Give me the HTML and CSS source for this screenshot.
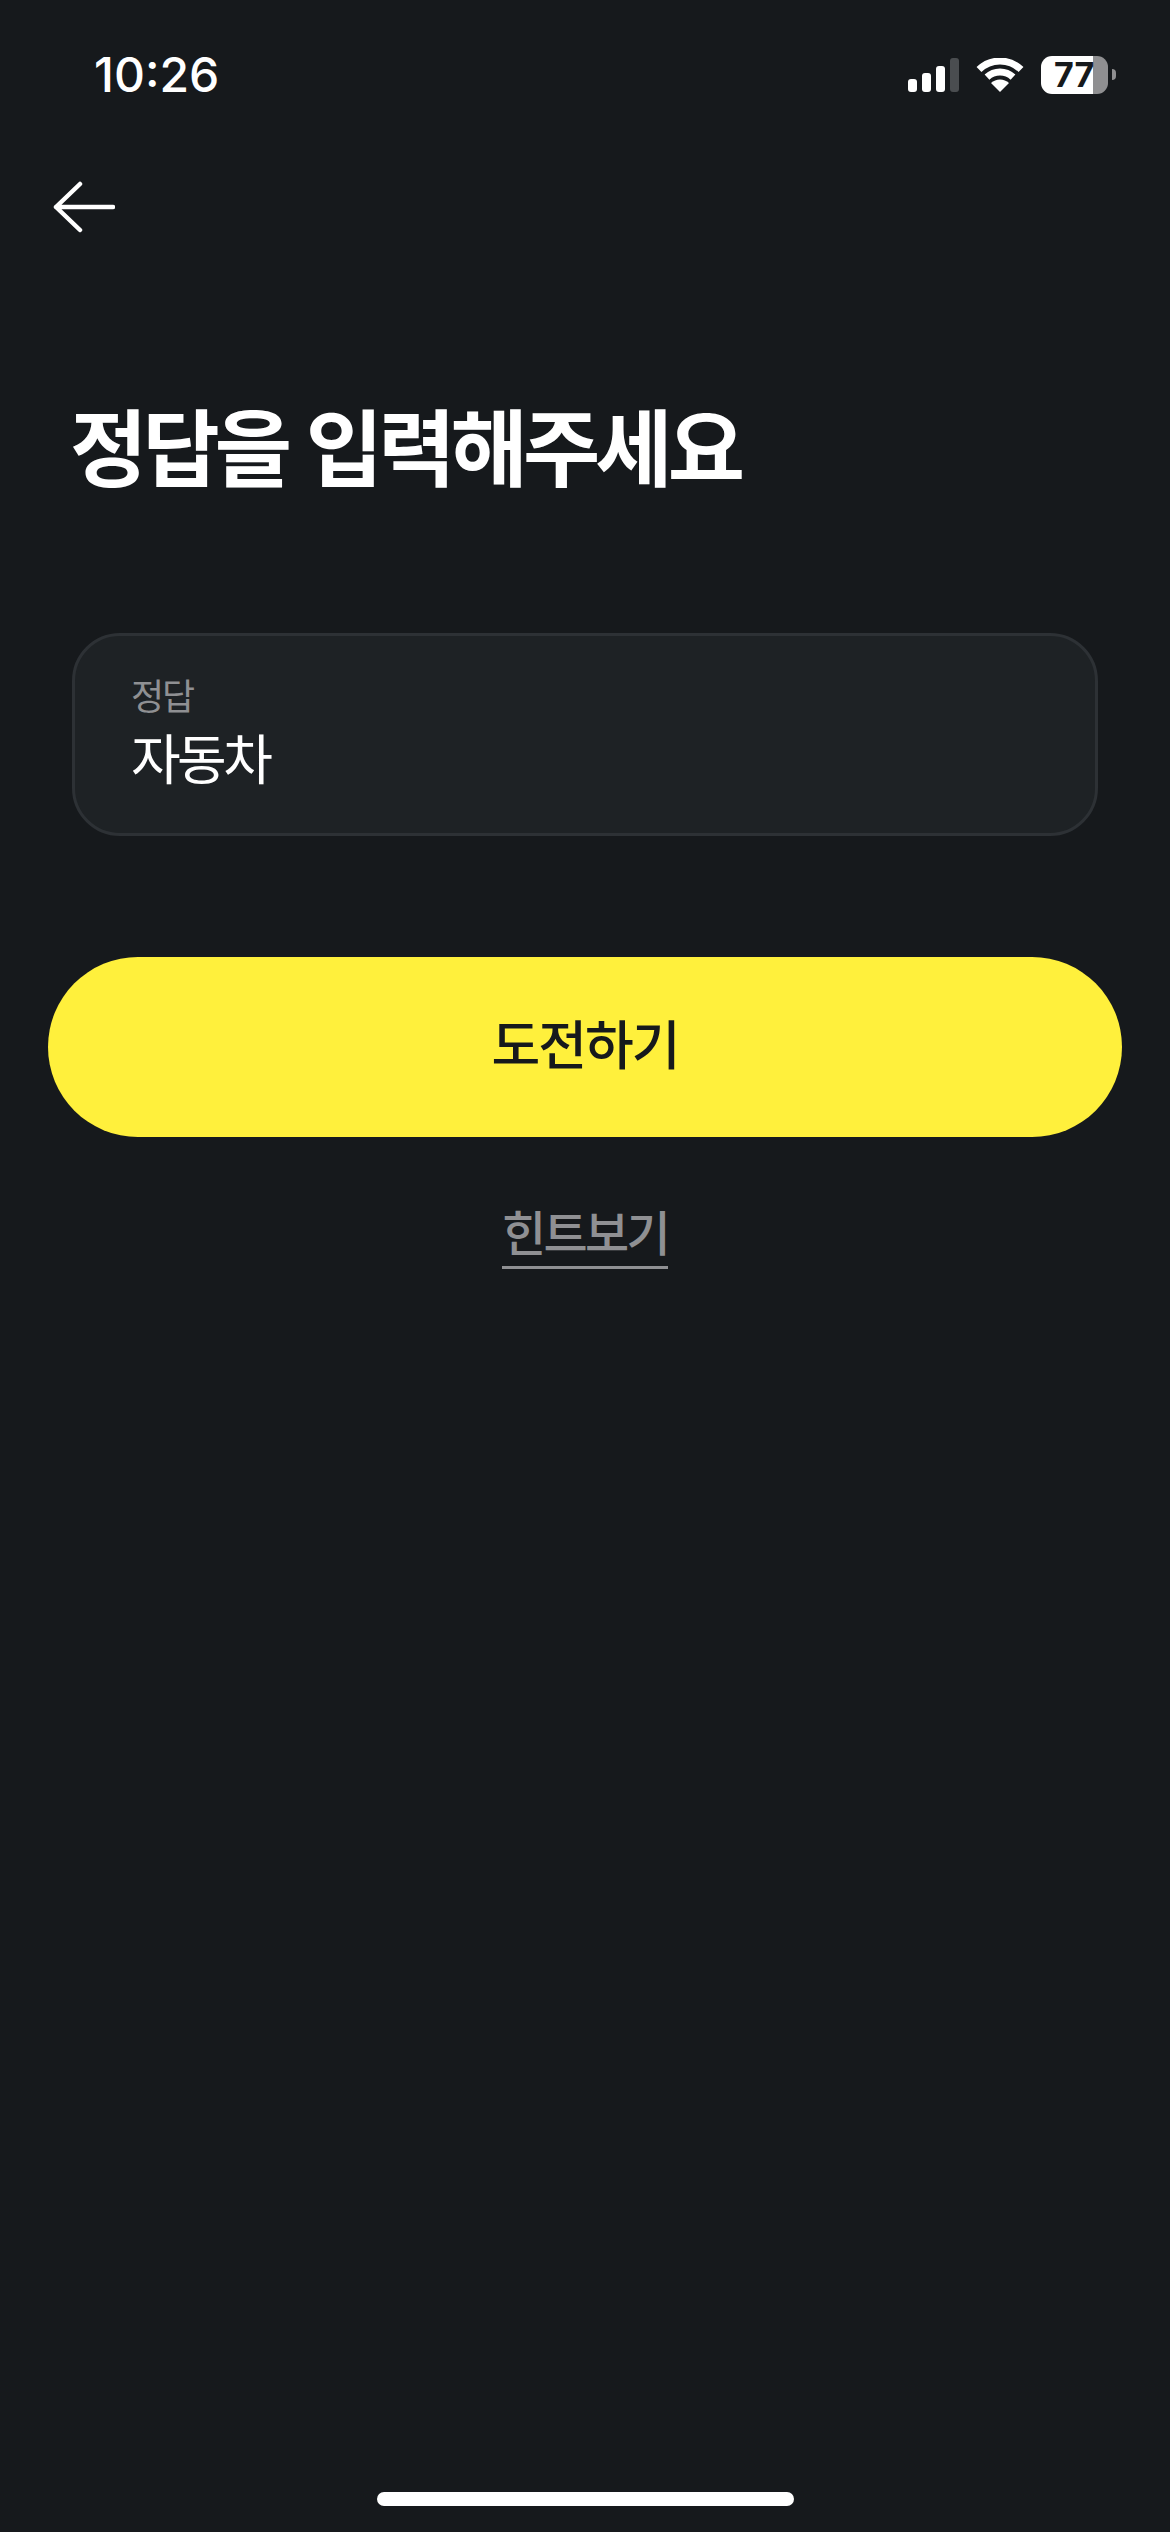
FILE: index.html
```html
<!DOCTYPE html>
<html lang="ko">
<head>
    <title>정답 입력</title>
    <link rel="stylesheet" href="styles.css">
</head>
<body>
    <div class="status">
        <span class="time">10:26</span>
        <div class="status-icons">
            <div class="signal">
                <i class="bar bar1"></i>
                <i class="bar bar2"></i>
                <i class="bar bar3"></i>
                <i class="bar bar4"></i>
            </div>
            <svg class="wifi" width="48" height="34" viewBox="0 0 48 34">
                <path d="M3 11.6A30 30 0 0 1 45 11.6M11 19.1A19 19 0 0 1 37 19.1" fill="none" stroke="#fff" stroke-width="7"/>
                <path d="M24 34L15 25A13 13 0 0 1 33 25Z" fill="#fff"/>
            </svg>
            <div class="battery">77</div>
            <i class="battery-nib"></i>
        </div>
    </div>

    <a class="back">
        <svg width="62" height="52" viewBox="0 0 62 52">
            <path d="M60 26H3M27 3L3 26L27 49" fill="none" stroke="#fff" stroke-width="4.5" stroke-linecap="round" stroke-linejoin="round"/>
        </svg>
    </a>

    <h1 class="title">정답을 입력해주세요</h1>

    <div class="answer-box">
        <label class="answer-label">정답</label>
        <div class="answer-value">자동차</div>
    </div>

    <button class="submit">도전하기</button>

    <div class="hint-row">
        <a class="hint">힌트보기</a>
    </div>

    <div class="home-bar"></div>
</body>
</html>
```

FILE: styles.css
```css
html, body {
    margin: 0;
    height: 2532px;
}
body {
    display: flex;
    flex-direction: column;
    background-color: #16191c;
    color: #fff;
    font-family: "Noto Sans CJK KR", "Noto Sans", sans-serif;
}
.status {
    display: flex;
    justify-content: space-between;
    align-items: center;
    height: 149px;
    padding: 0 54px 0 94px;
}
.time {
    font-family: Inter, sans-serif;
    font-size: 48px;
    font-weight: 500;
}
.status-icons {
    display: flex;
    align-items: center;
}
.signal {
    display: flex;
    align-items: flex-end;
    gap: 5px;
    height: 34px;
    margin-right: 17px;
}
.bar {
    width: 9px;
    border-radius: 3px;
    background-color: #fff;
}
.bar1 { height: 13px; }
.bar2 { height: 19px; }
.bar3 { height: 26px; }
.bar4 { height: 34px; background-color: #4a4d50; }
.wifi {
    margin-right: 17px;
}
.battery {
    width: 67px;
    height: 38px;
    border-radius: 11px;
    background: linear-gradient(to right, #fff 52px, #8f8f91 52px);
    color: #16191c;
    font-family: Inter, sans-serif;
    font-size: 34px;
    font-weight: 700;
    line-height: 38px;
    padding-left: 13px;
    box-sizing: border-box;
}
.battery-nib {
    width: 4px;
    height: 11px;
    margin-left: 4px;
    border-radius: 0 6px 6px 0;
    background-color: #8f8f91;
}
.back {
    display: block;
    height: 52px;
    margin: 32px 0 0 53px;
}
.back svg {
    display: block;
}
.title {
    margin: 161px 0 0 70px;
    font-size: 84px;
    font-weight: 700;
    letter-spacing: -4.9px;
    line-height: 100px;
}
.answer-box {
    height: 203px;
    margin: 139px 72px 0;
    padding: 34px 56px 0;
    box-sizing: border-box;
    border: 3px solid #2d3135;
    border-radius: 48px;
    background-color: #1e2225;
}
.answer-label {
    display: block;
    color: #8f9093;
    font-size: 36px;
    letter-spacing: -2px;
    line-height: 48px;
}
.answer-value {
    margin-top: 4px;
    font-size: 54px;
    letter-spacing: -3.6px;
    line-height: 70px;
}
.submit {
    display: block;
    width: 1074px;
    height: 180px;
    margin: 121px 48px 0;
    padding-bottom: 12px;
    border: none;
    border-radius: 90px;
    background-color: #fff03c;
    color: #16191c;
    font-family: inherit;
    font-size: 53px;
    font-weight: 500;
    letter-spacing: -2px;
}
.hint-row {
    display: flex;
    justify-content: center;
    margin-top: 63px;
}
.hint {
    color: #8f9093;
    font-size: 48px;
    font-weight: 500;
    letter-spacing: -2.7px;
    line-height: 60px;
    padding-bottom: 6px;
    border-bottom: 3px solid #8f9093;
}
.home-bar {
    width: 417px;
    height: 14px;
    margin: auto auto 26px;
    border-radius: 7px;
    background-color: #fff;
}
```
